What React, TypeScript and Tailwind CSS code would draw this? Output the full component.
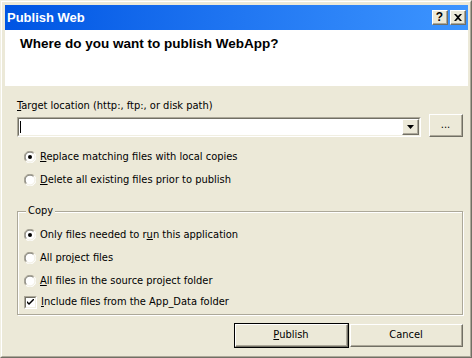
import React from "react";

const font = { fontFamily: '"Liberation Sans", Arial, sans-serif' };
const body = { fontFamily: '"DejaVu Sans Condensed", "DejaVu Sans", sans-serif', fontStretch: "condensed" as const };

function Radio({ checked }: { checked?: boolean }) {
  return (
    <svg width="12" height="12" viewBox="0 0 12 12" className="shrink-0">
      <circle cx="6" cy="6" r="5.5" fill="#ffffff" />
      <path d="M10.2 1.8 A5.5 5.5 0 0 0 1.8 10.2" fill="none" stroke="#aca899" strokeWidth="1" />
      <path d="M1.8 10.2 A5.5 5.5 0 0 0 10.2 1.8" fill="none" stroke="#ffffff" strokeWidth="1" />
      <path d="M9.5 2.5 A4.5 4.5 0 0 0 2.5 9.5" fill="none" stroke="#716f64" strokeWidth="1" />
      <path d="M2.5 9.5 A4.5 4.5 0 0 0 9.5 2.5" fill="none" stroke="#f1efe2" strokeWidth="1" />
      {checked && <circle cx="6" cy="6" r="2" fill="#000" />}
    </svg>
  );
}

function Check() {
  return (
    <div className="w-[13px] h-[13px] shrink-0 border-t border-l border-[#aca899] border-r border-b border-r-white border-b-white">
      <div className="w-full h-full bg-white border-t border-l border-[#716f64] border-r border-b border-r-[#f1efe2] border-b-[#f1efe2] flex items-center justify-center">
        <svg width="7" height="7" viewBox="0 0 7 7">
          <path d="M0 2 L0 4 L2 6 L7 1 L7 -1 L2 4 Z" fill="#000" />
        </svg>
      </div>
    </div>
  );
}

function Row({ children }: { children: React.ReactNode }) {
  return <div className="h-[23px] flex items-center gap-[4px]">{children}</div>;
}

function Btn({ children, className = "" }: { children: React.ReactNode; className?: string }) {
  return (
    <div className={"bg-[#ece9d8] border-t border-l border-white border-r border-b border-r-[#716f64] border-b-[#716f64] " + className}>
      <div className="w-full h-full border-r border-b border-[#aca899] flex items-center justify-center">
        {children}
      </div>
    </div>
  );
}

export default function App() {
  return (
    <div style={font} className="w-[472px] h-[358px] bg-[#ece9d8] text-black text-[11px] leading-[14px]">
      <div className="w-full h-full border-t border-l border-[#f1efe2] border-r border-b border-r-[#716f64] border-b-[#716f64]">
        <div className="w-full h-full border-t border-l border-white border-r border-b border-r-[#aca899] border-b-[#aca899] pt-[3px] pl-[3px] pr-[2px] pb-[2px] flex flex-col">
          {/* title bar */}
          <div className="h-[25px] shrink-0 flex items-center pl-[2px] pr-[2px] bg-gradient-to-r from-[#0054e3] to-[#3d95ff]">
            <div className="text-white font-bold text-[13px] flex-1 leading-[16px]">Publish Web</div>
            <div className="flex gap-[2px]">
              <Btn className="w-[16px] h-[15px]">
                <span className="font-bold text-[12px] leading-[12px]">?</span>
              </Btn>
              <Btn className="w-[16px] h-[15px]">
                <svg width="8" height="7" viewBox="0 0 8 7">
                  <path d="M0 0 L2 0 L4 2 L6 0 L8 0 L5 3.5 L8 7 L6 7 L4 5 L2 7 L0 7 L3 3.5 Z" fill="#000" />
                </svg>
              </Btn>
            </div>
          </div>
          {/* header */}
          <div className="h-[56px] shrink-0 bg-white pl-[15px] pt-[6px]">
            <div className="font-bold text-[13.5px] leading-[16px]">Where do you want to publish WebApp?</div>
          </div>
          {/* body */}
          <div style={body} className="flex-1 pl-[12px] pr-[5px] pt-[13px] flex flex-col">
            <div className="h-[14px]"><span className="underline">T</span>arget location (http:, ftp:, or disk path)</div>
            <div className="mt-[1px] h-[23px] flex items-start">
              <div className="mt-[3px] w-[404px] h-[20px] border-t border-l border-[#aca899] border-r border-b border-r-white border-b-white">
                <div className="w-full h-full bg-white border-t border-l border-[#716f64] border-r border-b border-r-[#f1efe2] border-b-[#f1efe2] flex items-center pl-[1px]">
                  <div className="w-[1px] h-[12px] bg-black" />
                  <div className="flex-1" />
                  <Btn className="w-[17px] h-[16px]">
                    <svg width="7" height="4" viewBox="0 0 7 4">
                      <path d="M0 0 L7 0 L3.5 4 Z" fill="#000" />
                    </svg>
                  </Btn>
                </div>
              </div>
              <div className="flex-1" />
              <Btn className="w-[34px] h-[23px]">
                <span className="text-[11px] leading-[10px]">...</span>
              </Btn>
            </div>
            <div className="mt-[8px] pl-[7px]">
              <Row><Radio checked /><span><span className="underline">R</span>eplace matching files with local copies</span></Row>
              <Row><Radio /><span><span className="underline">D</span>elete all existing files prior to publish</span></Row>
            </div>
            <div className="relative mt-[20px] h-[104px] border border-[#aca899] shadow-[inset_1px_1px_0_#ffffff,1px_1px_0_#ffffff] pt-[11px] pl-[6px]">
              <div className="absolute left-[8px] top-[-8px] px-[2px] bg-[#ece9d8]">Copy</div>
              <Row><Radio checked /><span>Only files needed to r<span className="underline">u</span>n this application</span></Row>
              <Row><Radio /><span>All pro<span className="underline">j</span>ect files</span></Row>
              <Row><Radio /><span><span className="underline">A</span>ll files in the source project folder</span></Row>
              <div className="h-[20px] flex items-center gap-[4px]"><Check /><span><span className="underline">I</span>nclude files from the App_Data folder</span></div>
            </div>
            <div className="mt-[9px] flex justify-end gap-[2px]">
              <Btn className="w-[113px] h-[23px] outline outline-1 outline-black">
                <span><span className="underline">P</span>ublish</span>
              </Btn>
              <Btn className="w-[113px] h-[23px]">
                <span>Cancel</span>
              </Btn>
            </div>
          </div>
        </div>
      </div>
    </div>
  );
}
